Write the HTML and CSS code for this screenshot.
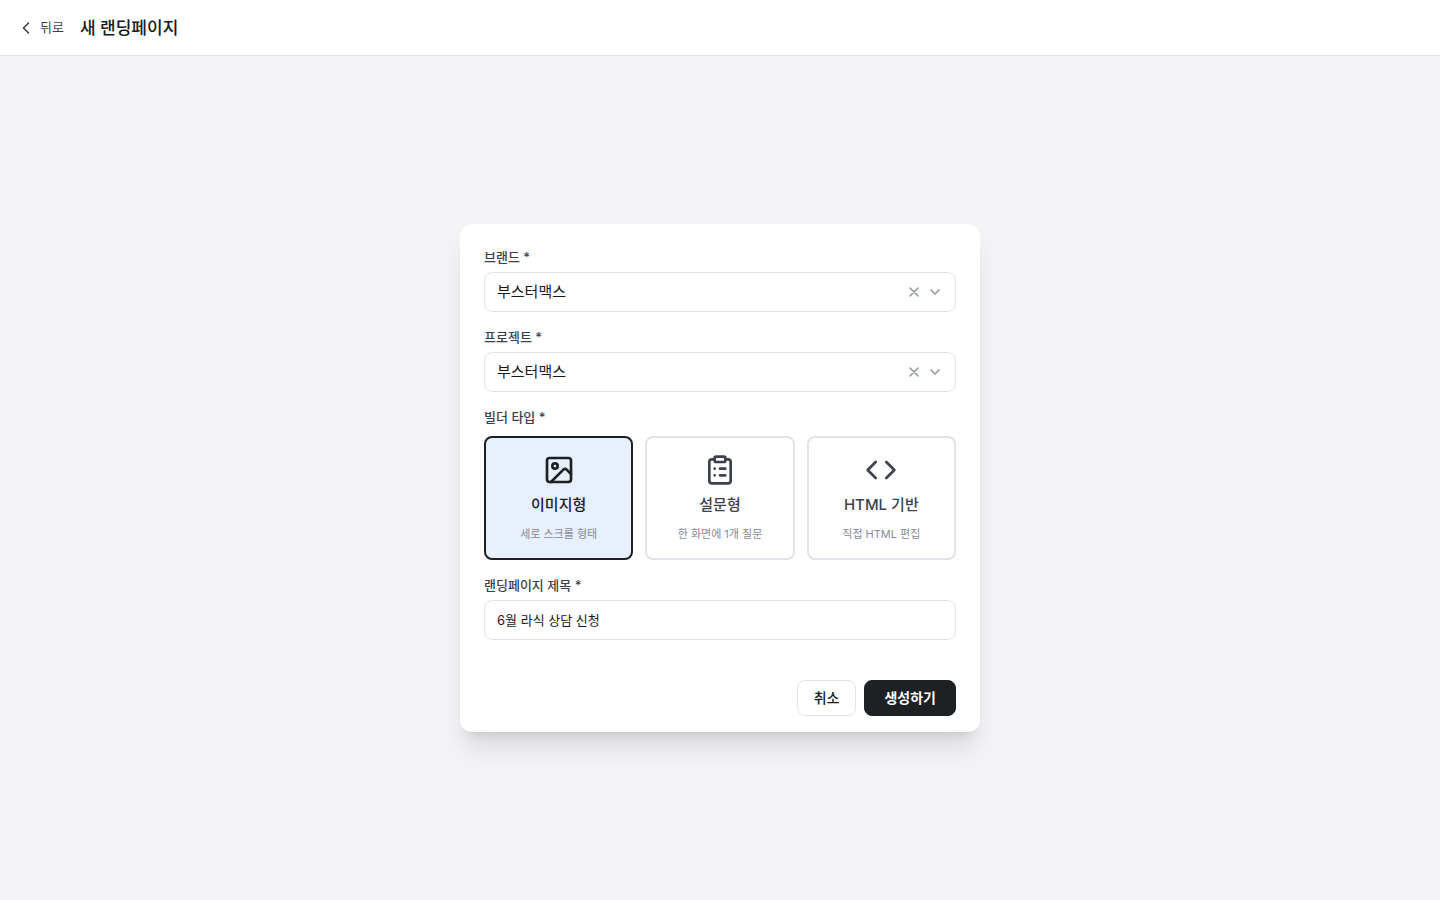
FILE: index.html
```html
<!DOCTYPE html>
<html lang="ko">

<head>
    <meta charset="UTF-8">
    <meta name="viewport" content="width=device-width, initial-scale=1.0">
    <title>새 랜딩페이지</title>
    <link rel="stylesheet" href="styles.css">
</head>

<body>
    <header class="header">
        <button type="button" class="back">
            <svg class="icon-back" viewBox="0 0 24 24"><path d="m15 18-6-6 6-6"/></svg>
            <span>뒤로</span>
        </button>
        <h1>새 랜딩페이지</h1>
    </header>

    <main class="main">
        <form class="card">
            <div class="card-body">
                <div class="field">
                    <label for="brand">브랜드 *</label>
                    <div class="select-box">
                        <select id="brand" name="brand">
                            <option selected>부스터맥스</option>
                        </select>
                        <div class="select-icons">
                            <button type="button" class="clear" aria-label="브랜드 지우기">
                                <svg viewBox="0 0 24 24"><path d="M18 6 6 18M6 6l12 12"/></svg>
                            </button>
                            <svg class="chevron" viewBox="0 0 24 24"><path d="m6 9 6 6 6-6"/></svg>
                        </div>
                    </div>
                </div>

                <div class="field">
                    <label for="project">프로젝트 *</label>
                    <div class="select-box">
                        <select id="project" name="project">
                            <option selected>부스터맥스</option>
                        </select>
                        <div class="select-icons">
                            <button type="button" class="clear" aria-label="프로젝트 지우기">
                                <svg viewBox="0 0 24 24"><path d="M18 6 6 18M6 6l12 12"/></svg>
                            </button>
                            <svg class="chevron" viewBox="0 0 24 24"><path d="m6 9 6 6 6-6"/></svg>
                        </div>
                    </div>
                </div>

                <fieldset class="types">
                    <legend>빌더 타입 *</legend>
                    <div class="type-list">
                        <label class="type">
                            <input type="radio" name="type" value="image" checked>
                            <svg viewBox="0 0 24 24">
                                <rect x="3" y="3" width="18" height="18" rx="2"/>
                                <circle cx="9" cy="9" r="2"/>
                                <path d="m21 15-3.086-3.086a2 2 0 0 0-2.828 0L6 21"/>
                            </svg>
                            <span class="type-name">이미지형</span>
                            <span class="type-desc">세로 스크롤 형태</span>
                        </label>
                        <label class="type">
                            <input type="radio" name="type" value="survey">
                            <svg viewBox="0 0 24 24">
                                <rect x="8" y="2" width="8" height="4" rx="1"/>
                                <path d="M16 4h2a2 2 0 0 1 2 2v14a2 2 0 0 1-2 2H6a2 2 0 0 1-2-2V6a2 2 0 0 1 2-2h2"/>
                                <path d="M12 11h4M12 16h4M8 11h.01M8 16h.01"/>
                            </svg>
                            <span class="type-name">설문형</span>
                            <span class="type-desc">한 화면에 1개 질문</span>
                        </label>
                        <label class="type">
                            <input type="radio" name="type" value="html">
                            <svg viewBox="0 0 24 24"><path d="m16 18 6-6-6-6M8 6l-6 6 6 6"/></svg>
                            <span class="type-name">HTML 기반</span>
                            <span class="type-desc">직접 HTML 편집</span>
                        </label>
                    </div>
                </fieldset>

                <div class="field">
                    <label for="title">랜딩페이지 제목 *</label>
                    <input type="text" id="title" name="title" value="6월 라식 상담 신청">
                </div>
            </div>

            <div class="card-footer">
                <button type="button" class="btn btn-cancel">취소</button>
                <button type="submit" class="btn btn-submit">생성하기</button>
            </div>
        </form>
    </main>
</body>

</html>
```

FILE: styles.css
```css
* {
    box-sizing: border-box;
}

body {
    margin: 0;
    min-height: 100vh;
    display: flex;
    flex-direction: column;
    background-color: #f3f3f6;
    color: #17191c;
    font-family: Inter, "Noto Sans CJK KR", sans-serif;
    font-size: 15px;
}

button,
input,
select {
    font-family: inherit;
}

button {
    cursor: pointer;
}

svg {
    fill: none;
    stroke: currentColor;
    stroke-width: 2;
    stroke-linecap: round;
    stroke-linejoin: round;
}

.header {
    height: 56px;
    padding: 0 16px;
    display: flex;
    align-items: center;
    gap: 16px;
    background-color: #fff;
    border-bottom: 1px solid #e2e3e8;
}

.back {
    display: flex;
    align-items: center;
    gap: 4px;
    padding: 0;
    border: none;
    background: none;
    color: #3d414d;
    font-size: 13px;
    line-height: 18px;
}

.back span {
    padding-bottom: 2px;
}

.icon-back {
    width: 20px;
    height: 20px;
}

h1 {
    margin: 0;
    font-size: 17px;
    font-weight: 500;
    line-height: 28px;
}

.main {
    flex: 1;
    display: flex;
    align-items: center;
    justify-content: center;
    padding: 24px;
}

.card {
    width: 100%;
    max-width: 520px;
    background-color: #fff;
    border-radius: 12px;
    box-shadow: 0 20px 25px -5px rgba(0, 0, 0, 0.1), 0 8px 10px -6px rgba(0, 0, 0, 0.1);
}

.card-body {
    display: flex;
    flex-direction: column;
    gap: 16px;
    padding: 24px;
}

.field {
    display: flex;
    flex-direction: column;
    gap: 6px;
}

.field > label,
legend {
    padding: 0;
    color: #3d414d;
    font-size: 13px;
    font-weight: 500;
    line-height: 18px;
}

.select-box {
    position: relative;
}

select,
input[type="text"] {
    display: block;
    width: 100%;
    height: 40px;
    padding: 0 12px 2px;
    border: 1px solid #e2e3e8;
    border-radius: 8px;
    background-color: #fff;
    color: #17191c;
}

select {
    appearance: none;
    font-size: 15px;
}

input[type="text"] {
    font-size: 13px;
}

/* icons lie over the right end of the select */
.select-icons {
    position: absolute;
    top: 0;
    bottom: 0;
    right: 13px;
    display: flex;
    align-items: center;
    gap: 5px;
    color: #858b98;
    pointer-events: none;
}

.select-icons svg {
    width: 16px;
    height: 16px;
}

.clear {
    display: flex;
    padding: 0;
    border: none;
    background: none;
    color: inherit;
    pointer-events: auto;
}

.types {
    min-width: 0;
    margin: 0;
    padding: 0;
    border: none;
}

.type-list {
    display: grid;
    grid-template-columns: repeat(3, 1fr);
    gap: 12px;
    padding-top: 10px;
}

.type {
    position: relative;
    display: flex;
    flex-direction: column;
    align-items: center;
    gap: 8px;
    padding: 16px 8px;
    border: 2px solid #e2e3e8;
    border-radius: 8px;
    color: #3d414d;
    cursor: pointer;
}

.type:has(input:checked) {
    border-color: #1e2124;
    background-color: #e8effd;
    color: #1e2124;
}

.type input {
    position: absolute;
    inset: 0;
    margin: 0;
    opacity: 0;
    cursor: pointer;
}

.type svg {
    width: 32px;
    height: 32px;
}

.type-name {
    padding-bottom: 2px;
    font-size: 15px;
    font-weight: 500;
    line-height: 22px;
}

.type-desc {
    color: #858b98;
    font-size: 11px;
    line-height: 16px;
}

.card-footer {
    display: flex;
    justify-content: flex-end;
    gap: 8px;
    padding: 16px 24px;
}

.btn {
    height: 36px;
    padding-bottom: 2px;
    border: 1px solid #e2e3e8;
    border-radius: 8px;
    font-size: 14px;
    font-weight: 500;
}

.btn-cancel {
    padding: 0 16px 2px;
    background-color: #fff;
    color: #17191c;
}

.btn-submit {
    padding: 0 19px 2px;
    border-color: #1e2124;
    background-color: #1e2124;
    color: #fff;
    font-weight: 600;
}
```
